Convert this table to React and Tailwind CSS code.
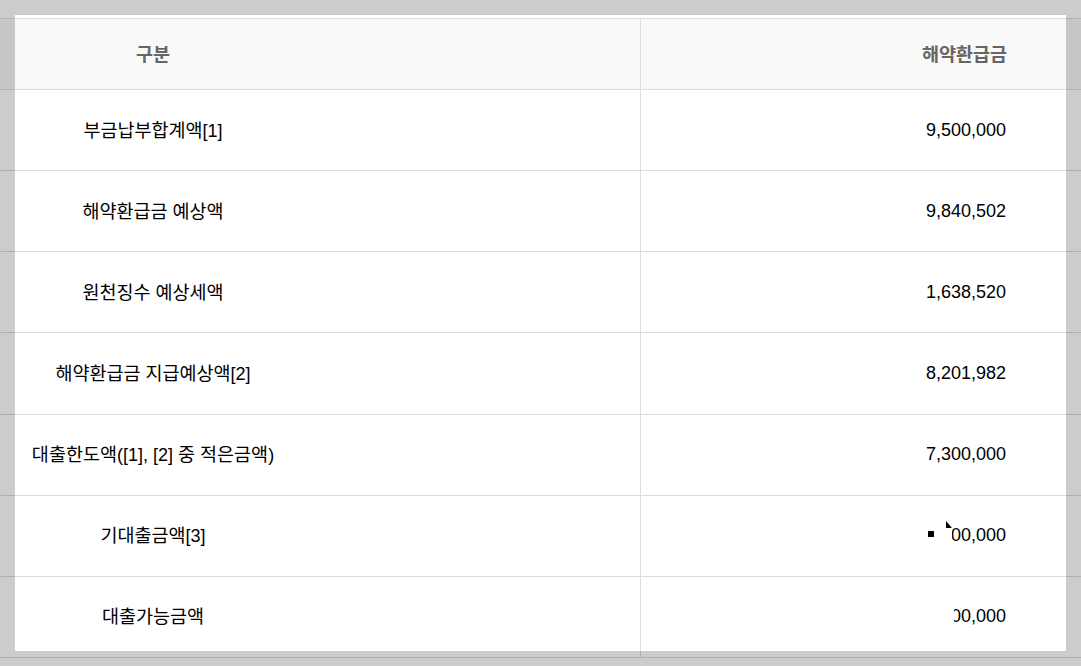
const rows = [
  { label: "부금납부합계액[1]", value: "9,500,000" },
  { label: "해약환급금 예상액", value: "9,840,502" },
  { label: "원천징수 예상세액", value: "1,638,520" },
  { label: "해약환급금 지급예상액[2]", value: "8,201,982" },
  { label: "대출한도액([1], [2] 중 적은금액)", value: "7,300,000" },
  { label: "기대출금액[3]", value: "masked1" },
  { label: "대출가능금액", value: "masked2" },
];

// Hangul runs are set a bit larger than the Latin text, as in the reference
function Txt({ text }) {
  return text.split(/([\uAC00-\uD7A3]+)/).map((part, i) =>
    /[\uAC00-\uD7A3]/.test(part) ? (
      <span key={i} className="text-[18.5px]" style={{ fontFamily: '"Noto Sans CJK KR", sans-serif' }}>
        {part}
      </span>
    ) : (
      <span key={i}>{part}</span>
    )
  );
}

function Value({ value }) {
  if (value === "masked1") {
    return (
      <div className="flex items-center justify-end">
        <span className="w-[6px] h-[6px] bg-black mr-[12px] -translate-y-[2px]" />
        <svg width="6" height="7" viewBox="0 0 6 7" className="-translate-y-[11px]">
          <polygon points="0,0 6,7 0,7" fill="#000" />
        </svg>
        <span className="w-[54px] overflow-hidden flex justify-end">
          <span className="whitespace-nowrap">0,000,000</span>
        </span>
      </div>
    );
  }
  if (value === "masked2") {
    return (
      <div className="flex justify-end">
        <span className="w-[52px] overflow-hidden flex justify-end">
          <span className="whitespace-nowrap">0,000,000</span>
        </span>
      </div>
    );
  }
  return <span>{value}</span>;
}

export default function App() {
  return (
    <div
      className="relative w-[1081px] h-[666px] overflow-hidden bg-white text-[18px] text-black"
      style={{ fontFamily: '"Liberation Sans", "Noto Sans CJK KR", sans-serif' }}
    >
      <div className="pt-[18px]">
        <div className="border-t border-[#dddddd]">
          <div className="flex h-[71px] bg-[#f9f9f9] border-b border-[#dddddd] font-bold text-[#666666]">
            <div className="w-[641px] border-r border-[#dddddd] flex items-center">
              <div className="w-[306px] text-center">
                <Txt text="구분" />
              </div>
            </div>
            <div className="flex-1 flex items-center justify-end pr-[74px]">
              <Txt text="해약환급금" />
            </div>
          </div>
          {rows.map((r) => (
            <div key={r.label} className="flex h-[81.14px] border-b border-[#dddddd]">
              <div className="w-[641px] border-r border-[#dddddd] flex items-center">
                <div className="w-[306px] text-center whitespace-nowrap">
                  <Txt text={r.label} />
                </div>
              </div>
              <div className="flex-1 flex items-center justify-end pr-[75px]">
                <Value value={r.value} />
              </div>
            </div>
          ))}
        </div>
      </div>
      <div className="absolute left-[15px] top-[15px] w-[1051px] h-[636px] pointer-events-none shadow-[0_0_0_2000px_rgba(0,0,0,0.2)]" />
    </div>
  );
}
